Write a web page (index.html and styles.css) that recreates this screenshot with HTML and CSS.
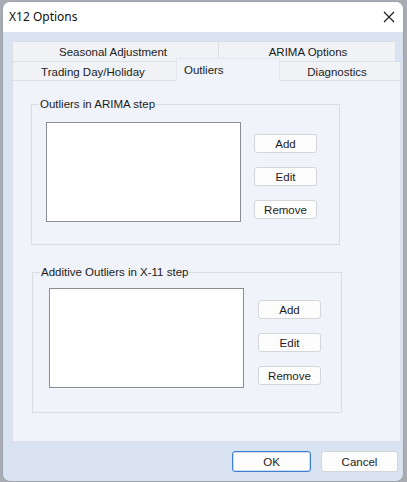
FILE: index.html
```html
<!DOCTYPE html>
<html>
<head>
<meta charset="utf-8">
<title>X12 Options</title>
<link rel="stylesheet" href="styles.css">
</head>
<body>
<div class="window">
  <div class="titlebar">
    <span class="title">X12 Options</span>
    <span class="close" aria-label="Close">
      <svg width="12" height="12" viewBox="0 0 12 12"><path d="M1 1 L11 11 M11 1 L1 11" stroke="#1a1a1a" stroke-width="1.1" fill="none"/></svg>
    </span>
  </div>
  <div class="client">
    <div class="tabs">
      <div class="tabrow row1">
        <div class="tab t-seasonal">Seasonal Adjustment</div>
        <div class="tab t-arima">ARIMA Options</div>
      </div>
      <div class="tabrow row2">
        <div class="tab t-trading">Trading Day/Holiday</div>
        <div class="tab t-outliers active">Outliers</div>
        <div class="tab t-diag">Diagnostics</div>
      </div>
    </div>
    <div class="panel">
      <fieldset class="group g1">
        <legend>Outliers in ARIMA step</legend>
        <div class="group-body">
          <div class="listbox"></div>
          <div class="btncol">
            <button class="btn">Add</button>
            <button class="btn">Edit</button>
            <button class="btn">Remove</button>
          </div>
        </div>
      </fieldset>
      <fieldset class="group g2">
        <legend>Additive Outliers in X-11 step</legend>
        <div class="group-body">
          <div class="listbox"></div>
          <div class="btncol">
            <button class="btn">Add</button>
            <button class="btn">Edit</button>
            <button class="btn">Remove</button>
          </div>
        </div>
      </fieldset>
    </div>
    <div class="footer">
      <button class="dbtn ok">OK</button>
      <button class="dbtn cancel">Cancel</button>
    </div>
  </div>
</div>
</body>
</html>
```

FILE: styles.css
```css
* { box-sizing: border-box; }
html, body {
  margin: 0;
  padding: 0;
  width: 407px;
  height: 482px;
  overflow: hidden;
  background: #a9adb3;
}
body {
  font-family: "Liberation Sans", Arial, sans-serif;
  font-size: 11.5px;
  color: #1c1c1c;
}
.window {
  margin: 1px 0 0 2px;
  width: 402px;
  height: 481px;
  border: 1px solid #9ea4ad;
  border-radius: 8px;
  overflow: hidden;
  background: #d8e2f0;
  display: flex;
  flex-direction: column;
}
.titlebar {
  height: 30px;
  flex: none;
  background: #ffffff;
  display: flex;
  align-items: center;
  justify-content: space-between;
  padding: 0 8px 0 6px;
}
.title {
  font-family: "Noto Sans", "Open Sans", sans-serif;
  font-size: 12px;
  color: #111;
  padding-bottom: 1px;
}
.close {
  display: flex;
  width: 12px;
  height: 12px;
}
.client {
  flex: 1;
  display: flex;
  flex-direction: column;
  padding: 9px 2px 0 9px;
}
.tabs {
  display: flex;
  flex-direction: column;
}
.tabrow {
  display: flex;
}
.tab {
  border: 1px solid #dcdfe5;
  border-bottom: none;
  background: #f0f2f6;
  display: flex;
  align-items: center;
  justify-content: center;
  white-space: nowrap;
}
.tab + .tab { margin-left: -1px; }
.row1 .tab { height: 20px; }
.row2 .tab { height: 19px; padding-top: 1px; }
.t-seasonal { width: 207px; padding-right: 5px; }
.t-arima { width: 178px; padding-left: 2px; }
.t-trading { width: 165px; padding-right: 3px; }
.t-outliers { width: 104px; justify-content: flex-start; padding-left: 7px; }
.t-diag { width: 122px; padding-right: 6px; }
.tab.active {
  position: relative;
  z-index: 1;
  background: #f0f3f9;
  border-color: #e4e7ec;
  height: 23px;
  margin-top: -3px;
  margin-bottom: -1px;
  padding-top: 0;
}
.panel {
  width: 389px;
  height: 362px;
  flex: none;
  background: #f0f3f9;
  border: 1px solid #dcdfe5;
  display: flex;
  flex-direction: column;
}
.group {
  margin: 0;
  padding: 0;
  border: 1px solid #d9dce2;
  min-width: 0;
}
.group legend {
  padding: 0 1px;
  margin-left: 7px;
  line-height: 13px;
  font-size: 11.5px;
}
.g1 {
  margin: 17px 0 0 18px;
  width: 309px;
  height: 147px;
}
.g2 {
  margin: 21px 0 0 19px;
  width: 310px;
  height: 147px;
}
.group-body {
  display: flex;
  align-items: flex-start;
}
.g1 .group-body { padding: 11px 0 0 14px; }
.g2 .group-body { padding: 9px 0 0 16px; }
.listbox {
  width: 195px;
  height: 100px;
  background: #ffffff;
  border: 1px solid #8a8d93;
  flex: none;
}
.btncol {
  display: flex;
  flex-direction: column;
  gap: 14px;
  margin-left: 13px;
  margin-top: 12px;
}
.g2 .btncol { margin-left: 14px; }
.btn, .dbtn {
  font-family: "Liberation Sans", Arial, sans-serif;
  font-size: 11.5px;
  color: #1c1c1c;
  background: #fdfdfd;
  border: 1px solid #d3d6db;
  border-radius: 3px;
  padding: 0;
  margin: 0;
  display: flex;
  align-items: center;
  justify-content: center;
}
.btn {
  width: 63px;
  height: 19px;
}
.footer {
  display: flex;
  justify-content: flex-end;
  gap: 10px;
  padding: 9px 3px 0 0;
}
.dbtn {
  height: 21px;
}
.ok {
  width: 79px;
  border: 1px solid #3f7fd0;
  box-shadow: inset 0 0 0 1px rgba(63, 127, 208, 0.25);
}
.cancel {
  width: 77px;
}
```
